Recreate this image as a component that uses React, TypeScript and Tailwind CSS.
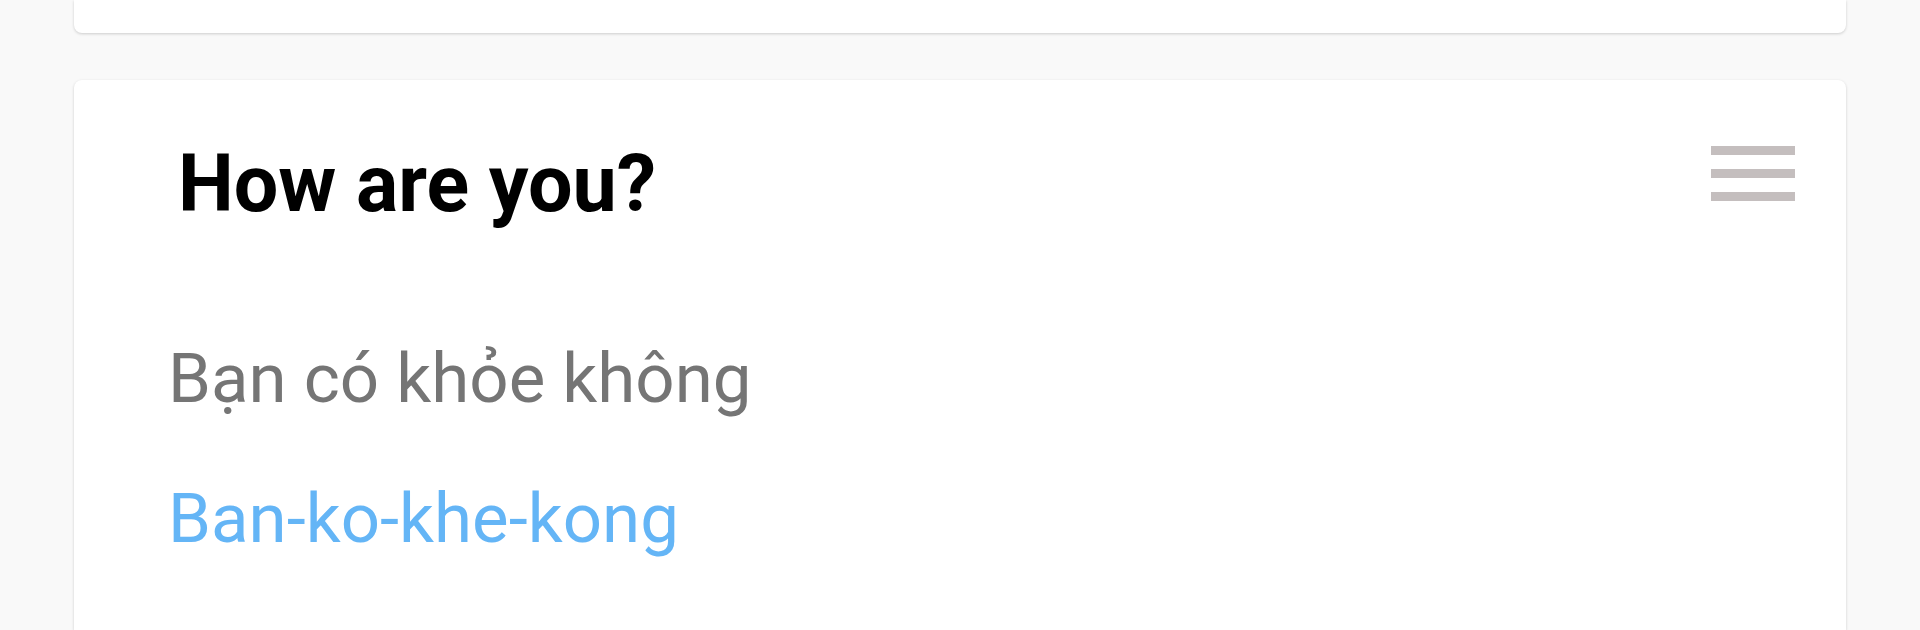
import React from "react";

export default function App() {
  return (
    <div
      className="w-full h-[630px] overflow-hidden bg-[#f9f9f9] px-[74px] flex flex-col gap-[47px]"
      style={{ fontFamily: "Roboto, 'Noto Sans', sans-serif" }}
    >
      <div className="h-[33px] shrink-0 bg-white rounded-b-[8px] shadow-[0_1px_3px_rgba(0,0,0,0.18)]" />
      <div className="relative flex-1 bg-white rounded-t-[8px] shadow-[0_1px_3px_rgba(0,0,0,0.18)] pt-[65px]">
        <div className="absolute right-[51px] top-[66px] flex flex-col gap-[14px]">
          <div className="w-[84px] h-[9px] bg-[#c4bebe]" />
          <div className="w-[84px] h-[9px] bg-[#c4bebe]" />
          <div className="w-[84px] h-[9px] bg-[#c4bebe]" />
        </div>
        <h1 className="pl-[104px] text-[79px] leading-[79px] font-bold text-black">
          How are you?
        </h1>
        <p className="mt-[120px] pl-[94px] text-[69px] leading-[69px] text-[#757575]">
          Bạn có khỏe không
        </p>
        <p className="mt-[71px] pl-[94px] text-[69px] leading-[69px] text-[#64b5f6]">
          Ban-ko-khe-kong
        </p>
      </div>
    </div>
  );
}
